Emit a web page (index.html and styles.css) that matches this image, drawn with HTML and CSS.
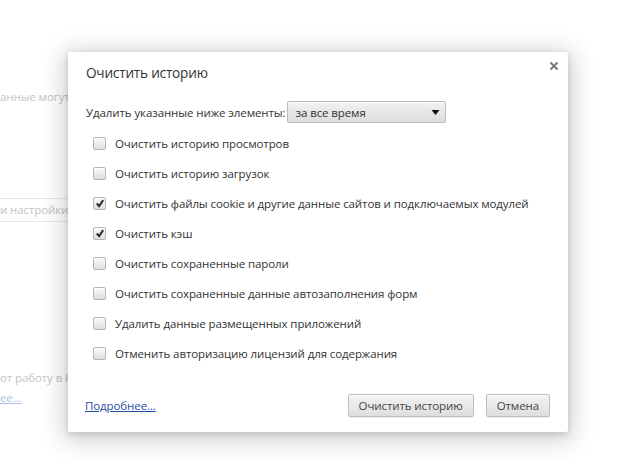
FILE: index.html
```html
<!DOCTYPE html>
<html lang="ru">
<head>
<meta charset="utf-8">
<link rel="stylesheet" href="styles.css">
</head>
<body>
<div class="page">
  <div class="bg-line bg-first">анные могут</div>
  <div class="bg-input">и настройки</div>
  <div class="bg-line bg-third">от работу в К</div>
  <div class="bg-link">ее...</div>
</div>

<div class="dialog">
  <div class="close" aria-label="Закрыть">
    <svg width="10" height="10" viewBox="0 0 10 10"><path d="M1.5 1.5 L8.5 8.5 M8.5 1.5 L1.5 8.5" stroke="#7a7a7a" stroke-width="2"/></svg>
  </div>
  <h1 class="title">Очистить историю</h1>
  <div class="period">
    <span>Удалить указанные ниже элементы:</span>
    <div class="select">
      <span>за все время</span>
      <svg class="arrow" width="9" height="5" viewBox="0 0 9 5"><path d="M0.5 0 H8.5 L4.5 5 Z" fill="#111"/></svg>
    </div>
  </div>
  <ul class="options">
    <li><span class="cb"></span>Очистить историю просмотров</li>
    <li><span class="cb"></span>Очистить историю загрузок</li>
    <li><span class="cb checked"><svg width="11" height="11" viewBox="0 0 11 11"><path d="M2 5.5 L4.5 8.3 L9 1.8" fill="none" stroke="#2a2a2a" stroke-width="2.2"/></svg></span>Очистить файлы cookie и другие данные сайтов и подключаемых модулей</li>
    <li><span class="cb checked"><svg width="11" height="11" viewBox="0 0 11 11"><path d="M2 5.5 L4.5 8.3 L9 1.8" fill="none" stroke="#2a2a2a" stroke-width="2.2"/></svg></span>Очистить кэш</li>
    <li><span class="cb"></span>Очистить сохраненные пароли</li>
    <li><span class="cb"></span>Очистить сохраненные данные автозаполнения форм</li>
    <li><span class="cb"></span>Удалить данные размещенных приложений</li>
    <li><span class="cb"></span>Отменить авторизацию лицензий для содержания</li>
  </ul>
  <div class="footer">
    <a class="more" href="#">Подробнее...</a>
    <div class="buttons">
      <button class="btn">Очистить историю</button>
      <button class="btn">Отмена</button>
    </div>
  </div>
</div>
</body>
</html>
```

FILE: styles.css
```css
html, body {
  margin: 0;
  padding: 0;
  background: #fff;
}
body {
  width: 640px;
  height: 459px;
  overflow: hidden;
  position: relative;
  font-family: "Open Sans", "Noto Sans", sans-serif;
  font-size: 11.5px;
  letter-spacing: -0.1px;
  color: #333;
}
.page {
  display: flex;
  flex-direction: column;
  padding-top: 88px;
  color: #c4c4c4;
}
.bg-line {
  line-height: 18px;
  white-space: nowrap;
}
.bg-input {
  margin-top: 92px;
  height: 22px;
  line-height: 22px;
  width: 150px;
  border-top: 1px solid #e8e8e8;
  border-bottom: 1px solid #e8e8e8;
  white-space: nowrap;
}
.bg-third {
  margin-top: 147px;
}
.bg-link {
  color: #a9bde0;
  text-decoration: underline;
  line-height: 18px;
  margin-top: 2px;
}

.dialog {
  position: absolute;
  left: 68px;
  top: 52px;
  width: 500px;
  height: 380px;
  box-sizing: border-box;
  background: #fff;
  border-radius: 2px;
  box-shadow: 0 4px 23px 5px rgba(0,0,0,0.18), 0 2px 6px rgba(0,0,0,0.14);
  padding: 11px 18px 15px;
  display: flex;
  flex-direction: column;
}
.close {
  position: absolute;
  right: 9px;
  top: 9px;
  width: 10px;
  height: 10px;
  display: flex;
}
.title {
  margin: 0;
  font-size: 13.6px;
  letter-spacing: -0.2px;
  font-weight: normal;
  line-height: 20px;
  color: #333;
}
.period {
  margin-top: 18px;
  display: flex;
  align-items: center;
  gap: 1px;
  height: 22px;
}
.select {
  width: 159px;
  height: 22px;
  box-sizing: border-box;
  border: 1px solid #bdbdbd;
  border-radius: 2px;
  background: linear-gradient(#f3f3f3, #e9e9e9 40%, #dcdcdc);
  box-shadow: inset 0 1px 1px rgba(255,255,255,0.8);
  display: flex;
  align-items: center;
  justify-content: space-between;
  padding: 0 5px 0 8px;
  color: #333;
}
.arrow {
  display: block;
}
.options {
  list-style: none;
  margin: 5px 0 0;
  padding: 0;
  display: flex;
  flex-direction: column;
}
.options li {
  height: 30px;
  display: flex;
  align-items: center;
  white-space: nowrap;
}
.cb {
  width: 13px;
  height: 13px;
  box-sizing: border-box;
  margin: 0 9px 0 7px;
  border: 1px solid #b5b5b5;
  border-radius: 2px;
  background: linear-gradient(#fafafa, #ececec 50%, #dedede);
  box-shadow: inset 0 1px 1px rgba(255,255,255,0.9);
  display: flex;
  align-items: center;
  justify-content: center;
  flex: none;
}
.cb svg {
  display: block;
  margin-left: 1px;
}
.footer {
  margin-top: auto;
  display: flex;
  align-items: center;
  justify-content: space-between;
}
.more {
  color: #1f4ea8;
  text-decoration: underline;
  margin-left: -1px;
}
.buttons {
  display: flex;
  gap: 12px;
}
.btn {
  height: 23px;
  padding: 0 10px;
  font: inherit;
  letter-spacing: inherit;
  color: #444;
  border: 1px solid #bdbdbd;
  border-radius: 2px;
  background: linear-gradient(#f1f1f1, #ebebeb 40%, #dedede);
  box-shadow: 0 1px 0 rgba(0,0,0,0.06), inset 0 1px 1px rgba(255,255,255,0.8);
}
```
